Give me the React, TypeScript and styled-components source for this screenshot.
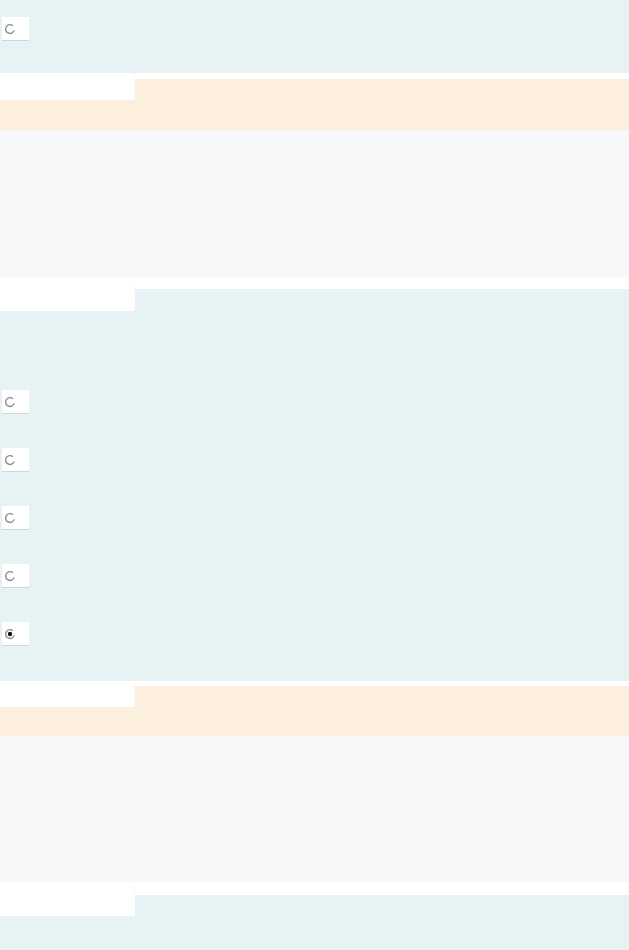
import React from "react";
import styled, { createGlobalStyle } from "styled-components";

const GlobalStyle = createGlobalStyle`
  html, body {
    margin: 0;
    padding: 0;
    background: #ffffff;
    font-family: "Liberation Sans", Arial, sans-serif;
  }
`;

const Page = styled.div`
  width: 629px;
  height: 950px;
  overflow: hidden;
`;

const BluePanel = styled.div<{ $pt: number; $pb: number }>`
  background: #e6f2f4;
  padding: ${(p) => p.$pt}px 0 ${(p) => p.$pb}px;
  display: flex;
  flex-direction: column;
  gap: 34px;
`;

const GrayPanel = styled.div<{ $h: number }>`
  background: #f6f8fa;
  height: ${(p) => p.$h}px;
`;

const PeachBand = styled.div<{ $h: number }>`
  background: #fcefde;
  height: ${(p) => p.$h}px;
`;

const HeaderRow = styled.div<{ $h: number }>`
  display: flex;
  height: ${(p) => p.$h}px;
`;

const Tab = styled.div`
  width: 134px;
  background: #ffffff;
  border-right: 1px solid #fbfcfc;
`;

const TabFill = styled.div<{ $gap: number; $color: string }>`
  flex: 1;
  border-top: ${(p) => p.$gap}px solid #ffffff;
  background: ${(p) => p.$color};
`;

const RadioBox = styled.label`
  width: 27px;
  height: 24px;
  margin-left: 2px;
  background: #ffffff;
  border-bottom: 1px solid #cfd6d9;
  display: flex;
  align-items: center;
  padding-left: 2px;
  box-sizing: border-box;
`;

function Radio({ checked }: { checked?: boolean }) {
  return (
    <RadioBox>
      <svg width="12" height="12" viewBox="0 0 12 12">
        <path
          d="M8.9 2.7 A4.4 4.4 0 1 0 10.2 7.4"
          fill="none"
          stroke="#8c8c8c"
          strokeWidth="1.4"
        />
        {checked && <circle cx="6" cy="6" r="2.2" fill="#111" />}
      </svg>
    </RadioBox>
  );
}

function PeachHeader({ gap, tab, band }: { gap: number; tab: number; band: number }) {
  return (
    <>
      <HeaderRow $h={tab}>
        <Tab />
        <TabFill $gap={gap} $color="#fcefde" />
      </HeaderRow>
      <PeachBand $h={band} />
    </>
  );
}

function BlueHeader({ gap }: { gap: number }) {
  return (
    <HeaderRow $h={34}>
      <Tab />
      <TabFill $gap={gap} $color="#e6f2f4" />
    </HeaderRow>
  );
}

export default function App() {
  const options = [false, false, false, false, true];
  return (
    <Page>
      <GlobalStyle />
      <BluePanel $pt={17} $pb={32}>
        <Radio />
      </BluePanel>
      <PeachHeader gap={6} tab={27} band={30} />
      <GrayPanel $h={147} />
      <BlueHeader gap={12} />
      <BluePanel $pt={79} $pb={35}>
        {options.map((c, i) => (
          <Radio key={i} checked={c} />
        ))}
      </BluePanel>
      <PeachHeader gap={5} tab={26} band={29} />
      <GrayPanel $h={146} />
      <BlueHeader gap={13} />
      <BluePanel $pt={0} $pb={60} />
    </Page>
  );
}
